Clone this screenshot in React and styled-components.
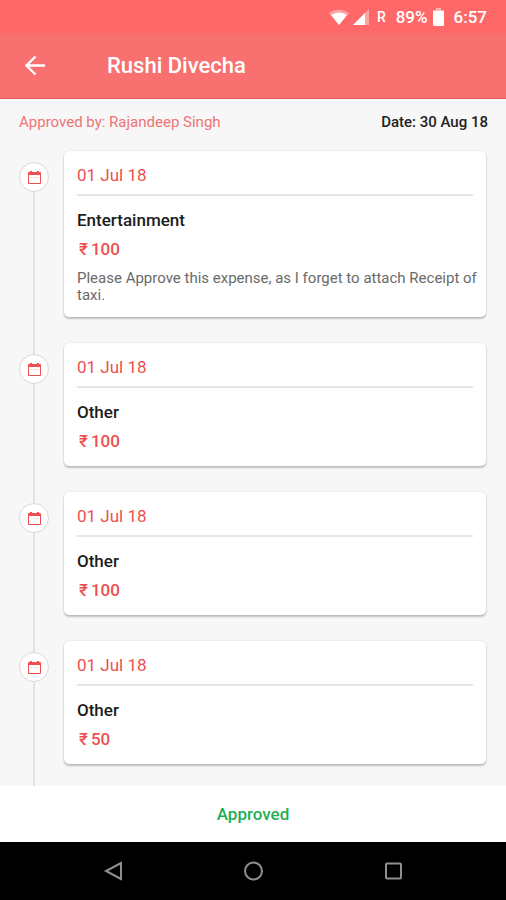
import styled, { createGlobalStyle } from 'styled-components';

const GlobalStyle = createGlobalStyle`
    * {
        box-sizing: border-box;
    }

    body {
        margin: 0;
        background: #f7f7f7;
        font-family: Roboto, 'Noto Sans', sans-serif;
    }
`;

// ======================
// Layout
// ======================
const Screen = styled.div`
    display: flex;
    flex-direction: column;
    min-height: 100vh;
`;

const StatusBar = styled.div`
    display: flex;
    align-items: center;
    justify-content: flex-end;
    height: 33px;
    padding: 0 19px;
    background: #ff6868;
    color: #fff;
    font-size: 17px;
    font-weight: 500;

    svg + svg {
        margin-left: 4px;
    }
`;

const Roaming = styled.span`
    margin: 0 10px 0 8px;
    font-size: 14px;
`;

const Charge = styled.span`
    margin-right: 5px;
`;

const Clock = styled.span`
    margin-left: 10px;
`;

const AppBar = styled.header`
    display: flex;
    align-items: center;
    height: 66px;
    padding: 0 19px;
    background: #f97070;
    border-bottom: 1px solid #e85c5e;
    color: #fff;
`;

const IconButton = styled.button`
    display: flex;
    align-items: center;
    justify-content: center;
    width: 32px;
    height: 32px;
    padding: 0;
    border: 0;
    background: none;
    color: inherit;
    cursor: pointer;
`;

const Title = styled.h1`
    margin: 0 0 0 56px;
    font-size: 22px;
    font-weight: 500;
`;

const Summary = styled.div`
    display: flex;
    justify-content: space-between;
    padding: 13px 18px 0 19px;
    font-size: 15px;
    line-height: 20px;
`;

const ApprovedBy = styled.span`
    color: #ec7475;
`;

const SummaryDate = styled.span`
    color: #222;
    font-weight: 500;
`;

// ======================
// Timeline
// ======================
const Timeline = styled.ol`
    flex: 1;
    margin: 0;
    padding: 19px 20px 0 19px;
    list-style: none;
`;

const Entry = styled.li`
    display: grid;
    grid-template-columns: 30px 1fr;
    column-gap: 15px;
`;

const Rail = styled.div`
    display: flex;
    flex-direction: column;
    align-items: center;

    &::before,
    &::after {
        content: '';
        width: 2px;
        background: #e2e2e2;
    }

    &::before {
        height: 11px;

        ${Entry}:first-child & {
            background: none;
        }
    }

    &::after {
        flex: 1;
    }
`;

const Marker = styled.span`
    display: flex;
    align-items: center;
    justify-content: center;
    width: 30px;
    height: 30px;
    border: 1px solid #d9d9d9;
    border-radius: 50%;
    background: #fff;
    color: #ee4f50;
`;

const Card = styled.article`
    margin-bottom: 26px;
    padding: 14px 13px 13px;
    border-radius: 5px;
    background: #fff;
    box-shadow: 0 0 2px rgba(0, 0, 0, 0.14), 0 2px 2px rgba(0, 0, 0, 0.22);
    font-size: 17px;
    line-height: 20px;

    ${Entry}:last-child & {
        margin-bottom: 22px;
    }
`;

const CardDate = styled.div`
    padding-bottom: 9px;
    border-bottom: 2px solid #e6e6e6;
    color: #ee4f50;
`;

const Category = styled.h2`
    margin: 14px 0 9px;
    color: #1c1c1c;
    font-size: 17px;
    font-weight: 500;
`;

const Amount = styled.div`
    display: flex;
    gap: 3px;
    padding: 0 0 2px 2px;
    color: #ee4f50;
    font-weight: 500;
`;

const Note = styled.p`
    margin: 9px -8px 0 0;
    color: #6a6a6a;
    font-size: 15px;
    line-height: 17px;
`;

// ======================
// Bottom bars
// ======================
const Status = styled.footer`
    padding: 18px 0;
    background: #fff;
    color: #1fae54;
    font-size: 17px;
    font-weight: 500;
    line-height: 20px;
    text-align: center;
`;

const NavBar = styled.nav`
    display: flex;
    justify-content: center;
    gap: 108px;
    padding: 13px 0;
    background: #000;
    color: #8f8f8f;
`;

const WifiIcon = () => (
    <svg width="20" height="16" viewBox="0 0 20 16" fill="#fff">
        <path d="M0 4Q10-3 20 4L10 16Z" opacity="0.4" />
        <path d="M2 6Q10 1 18 6L10 16Z" />
    </svg>
);

const SignalIcon = () => (
    <svg width="16" height="16" viewBox="0 0 16 16" fill="#fff">
        <path d="M16 0V16H0Z" opacity="0.4" />
        <path d="M12 4V16H0Z" />
    </svg>
);

const BatteryIcon = () => (
    <svg width="11" height="18" viewBox="0 0 11 18" fill="#fff">
        <path d="M3 0H8V2H11V4H0V2H3Z" opacity="0.5" />
        <rect y="3" width="11" height="15" rx="1" />
    </svg>
);

const BackArrow = () => (
    <svg width="20" height="20" viewBox="0 0 20 20" fill="none" stroke="#fff" strokeWidth="2.300">
        <path d="M20 9.500H2M10.500 0.500L1.500 9.500L10.500 18.500" />
    </svg>
);

const CalendarIcon = () => (
    <svg width="13" height="13" viewBox="0 0 13 13" fill="currentColor">
        <path d="M2 0H4V1H9V0H11V1H12Q13 1 13 2V12Q13 13 12 13H1Q0 13 0 12V2Q0 1 1 1H2ZM1 4V12H12V4Z" fillRule="evenodd" />
        <path d="M3 6H4.500V7H3ZM5.800 6H7.300V7H5.800ZM8.600 6H10V7H8.600Z" opacity="0.3" />
    </svg>
);

const expenses = [
    {
        date: '01 Jul 18',
        category: 'Entertainment',
        amount: 100,
        note: 'Please Approve this expense, as I forget to attach Receipt of taxi.'
    },
    { date: '01 Jul 18', category: 'Other', amount: 100 },
    { date: '01 Jul 18', category: 'Other', amount: 100 },
    { date: '01 Jul 18', category: 'Other', amount: 50 }
];

export default function App() {
    return (
        <Screen>
            <GlobalStyle />
            <StatusBar>
                <WifiIcon />
                <SignalIcon />
                <Roaming>R</Roaming>
                <Charge>89%</Charge>
                <BatteryIcon />
                <Clock>6:57</Clock>
            </StatusBar>

            <AppBar>
                <IconButton aria-label="Back">
                    <BackArrow />
                </IconButton>
                <Title>Rushi Divecha</Title>
            </AppBar>

            <Summary>
                <ApprovedBy>Approved by: Rajandeep Singh</ApprovedBy>
                <SummaryDate>Date: 30 Aug 18</SummaryDate>
            </Summary>

            <Timeline>
                {expenses.map((expense, index) => (
                    <Entry key={index}>
                        <Rail>
                            <Marker>
                                <CalendarIcon />
                            </Marker>
                        </Rail>
                        <Card>
                            <CardDate>{expense.date}</CardDate>
                            <Category>{expense.category}</Category>
                            <Amount>
                                <span>₹</span>
                                <span>{expense.amount}</span>
                            </Amount>
                            {expense.note && <Note>{expense.note}</Note>}
                        </Card>
                    </Entry>
                ))}
            </Timeline>

            <Status>Approved</Status>

            <NavBar>
                <IconButton aria-label="Go back">
                    <svg width="20" height="20" viewBox="0 0 20 20" fill="none" stroke="currentColor" strokeWidth="2">
                        <path d="M18 2V18L3 10Z" />
                    </svg>
                </IconButton>
                <IconButton aria-label="Home">
                    <svg width="20" height="20" viewBox="0 0 20 20" fill="none" stroke="currentColor" strokeWidth="2">
                        <circle cx="10.500" cy="10" r="8.500" />
                    </svg>
                </IconButton>
                <IconButton aria-label="Recent apps">
                    <svg width="20" height="20" viewBox="0 0 20 20" fill="none" stroke="currentColor" strokeWidth="2">
                        <rect x="3" y="2.500" width="15" height="15" rx="1" />
                    </svg>
                </IconButton>
            </NavBar>
        </Screen>
    );
}
